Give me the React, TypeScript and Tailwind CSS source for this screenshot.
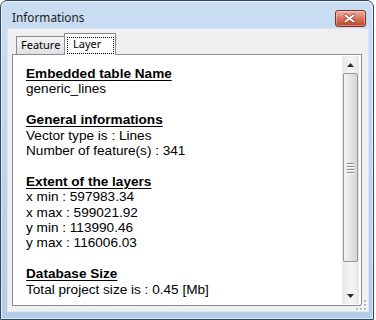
import React from "react";

const Heading = ({ children }: { children: React.ReactNode }) => (
  <div className="font-bold underline decoration-1 underline-offset-[2px]">{children}</div>
);
const Line = ({ children }: { children: React.ReactNode }) => <div>{children}</div>;
const Blank = () => <div className="h-[15.4px]" />;

function CloseButton() {
  return (
    <div className="ml-auto mr-[2px] w-[31px] h-[17px] rounded-[3px] border border-[#7d2f22] bg-gradient-to-b from-[#eab0a2] via-[#d6765f] to-[#c0412a] shadow-[inset_0_0_0_1px_rgba(255,255,255,0.35)] flex items-center justify-center">
      <svg width="31" height="17" viewBox="0 0 31 17" className="-m-px">
        <path d="M10.5 5.5 L18.5 11.5 M18.5 5.5 L10.5 11.5" stroke="#6e2418" strokeOpacity="0.55" strokeWidth="3.8" strokeLinecap="round" fill="none" />
        <path d="M10.5 5.5 L18.5 11.5 M18.5 5.5 L10.5 11.5" stroke="#ffffff" strokeWidth="2.1" strokeLinecap="round" fill="none" />
      </svg>
    </div>
  );
}

function ScrollBar() {
  return (
    <div className="w-[17px] my-px mr-[2px] flex flex-col bg-gradient-to-r from-[#e6e6e6] via-[#f5f5f5] to-[#e6e6e6] shrink-0">
      <div className="h-[17px] flex items-center justify-center shrink-0">
        <svg width="7" height="4" viewBox="0 0 7 4">
          <path d="M0 4 L3.5 0 L7 4 Z" fill="#2b2b2b" />
        </svg>
      </div>
      <div className="mx-px mt-0 h-[189px] rounded-[2px] border border-[#979797] bg-gradient-to-r from-[#f3f3f3] via-[#e6e6e6] to-[#d4d4d4] flex flex-col items-center justify-center gap-[2px] shrink-0">
        <div className="w-[7px] h-px bg-[#8c8c8c] shadow-[0_1px_0_#ffffff]" />
        <div className="w-[7px] h-px bg-[#8c8c8c] shadow-[0_1px_0_#ffffff]" />
        <div className="w-[7px] h-px bg-[#8c8c8c] shadow-[0_1px_0_#ffffff]" />
        <div className="w-[7px] h-px bg-[#8c8c8c] shadow-[0_1px_0_#ffffff]" />
      </div>
      <div className="flex-1" />
      <div className="h-[17px] flex items-center justify-center shrink-0">
        <svg width="7" height="4" viewBox="0 0 7 4">
          <path d="M0 0 L3.5 4 L7 0 Z" fill="#2b2b2b" />
        </svg>
      </div>
    </div>
  );
}

export default function App() {
  return (
    <div className="w-[376px] h-[320px] bg-white">
      <div className="w-[374px] h-[320px] rounded-t-[7px] border border-[#33475a] bg-gradient-to-b from-[#c9ddf3] to-[#b3cce8] shadow-[inset_0_0_0_1px_rgba(255,255,255,0.55)] flex flex-col pl-[7px] pr-[5px] pb-[8px]">
        <div className="h-[28px] flex items-start pt-[9px] shrink-0">
          <span
            className="ml-[4px] text-[11.8px] leading-[16px] -mt-px text-[#1b1b1b]"
            style={{ fontFamily: '"Noto Sans", sans-serif' }}
          >
            Informations
          </span>
          <CloseButton />
        </div>
        <div className="flex-1 bg-[#f0f0f0] relative flex flex-col pl-[4px] pr-[6px] pt-[4px] pb-[5px] shadow-[0_0_0_1px_#dbe6f3]">
          <div
            className="h-[22px] -mb-px flex items-end relative z-10 pl-[4px] text-[11px] text-black shrink-0"
            style={{ fontFamily: '"Noto Sans", sans-serif' }}
          >
            <div className="w-[48px] h-[18px] mb-px border-l border-t border-[#898c95] bg-gradient-to-b from-[#f4f4f4] to-[#e2e2e2] pl-[4px] pt-[2px] leading-[12px]">
              Feature
            </div>
            <div className="w-[52px] h-[22px] border-l border-t border-r border-[#898c95] bg-white pl-[2px] pr-px pt-[3px]">
              <div className="h-[17px] border border-dotted border-black pl-[5px] leading-[12px]">Layer</div>
            </div>
          </div>
          <div className="w-[350px] flex-1 border border-[#898c95] bg-white flex">
            <div
              className="flex-1 pl-[13px] pt-[11px] text-[13.6px] leading-[15.4px] text-black"
              style={{ fontFamily: '"Liberation Sans", Arial, sans-serif' }}
            >
              <Heading>Embedded table Name</Heading>
              <Line>generic_lines</Line>
              <Blank />
              <Heading>General informations</Heading>
              <Line>Vector type is : Lines</Line>
              <Line>Number of feature(s) : 341</Line>
              <Blank />
              <Heading>Extent of the layers</Heading>
              <Line>x min : 597983.34</Line>
              <Line>x max : 599021.92</Line>
              <Line>y min : 113990.46</Line>
              <Line>y max : 116006.03</Line>
              <Blank />
              <Heading>Database Size</Heading>
              <Line>Total project size is : 0.45 [Mb]</Line>
            </div>
            <ScrollBar />
          </div>
          <svg className="absolute right-[1px] bottom-0" width="11" height="11" viewBox="0 0 11 11">
            {[
              [8, 0],
              [8, 4],
              [4, 4],
              [8, 8],
              [4, 8],
              [0, 8],
            ].map(([x, y], i) => (
              <g key={i}>
                <rect x={x + 1} y={y + 1} width="2" height="2" fill="#ffffff" />
                <rect x={x} y={y} width="2" height="2" fill="#b4bac3" />
              </g>
            ))}
          </svg>
        </div>
      </div>
    </div>
  );
}
